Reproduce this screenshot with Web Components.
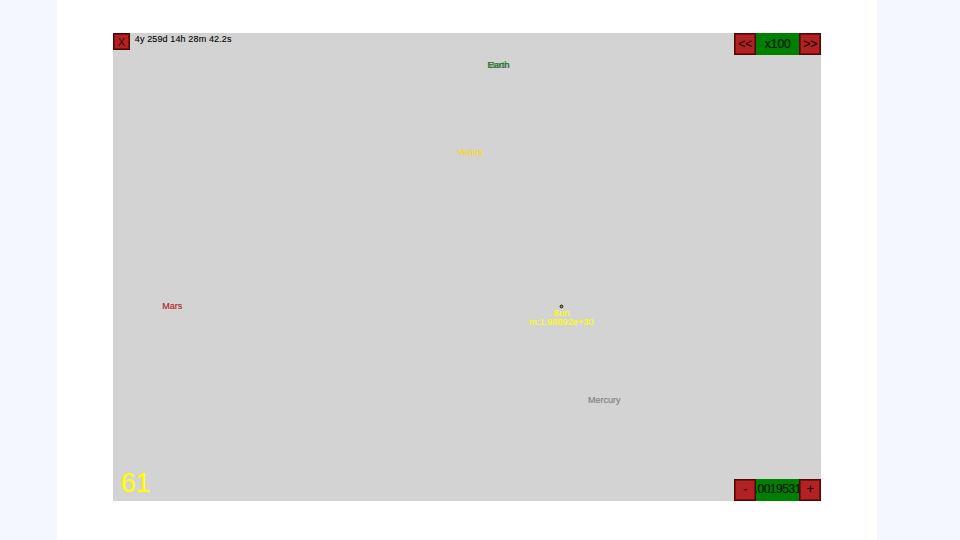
<!DOCTYPE html>
<html lang="en">
<head>
<meta charset="utf-8">
<title>Solar system</title>
<style>
body { margin: 0; background: #f4f7ff; font-family: "Liberation Sans", Arial, sans-serif; }
</style>
</head>
<body>
<orbit-app></orbit-app>
<script>
const attach = (el, html) => { el.attachShadow({ mode: "open" }).innerHTML = html; };

customElements.define("sim-button", class extends HTMLElement {
  constructor() {
    super();
    attach(this, `<style>
      :host { display: flex; flex: none; box-sizing: border-box; width: 22px; height: 22px; align-items: center; justify-content: center;
        background: #b22222; border: 1px solid #4a0808; box-shadow: inset 0 0 0 1px #7a1212; color: #1c0303;
        font-size: 12px; line-height: 14px; padding-bottom: var(--lift, 2px); -webkit-text-stroke: 0.2px; }
      :host([small]) { width: 17.5px; height: 17px; font-size: 10.5px; padding-bottom: 0; color: #3c0606; -webkit-text-stroke: 0; }
    </style><slot></slot>`);
  }
});

customElements.define("sim-stepper", class extends HTMLElement {
  constructor() {
    super();
    attach(this, `<style>
      :host { display: flex; width: 87px; height: 22px; font-size: 12px; }
      .value { flex: 1; min-width: 0; overflow: hidden; display: flex; align-items: center; justify-content: center;
        background: #008000; color: #041404; white-space: nowrap; line-height: 14px; padding-bottom: var(--lift, 2px); box-sizing: border-box;
        -webkit-text-stroke: 0.2px; }
      :host([dense]) .value { letter-spacing: -0.45px; }
      :host(:not([dense])) { --lift: 0px; }
    </style>
    <sim-button>${this.getAttribute("down").replace(/</g, "&lt;")}</sim-button>
    <div class="value"><slot></slot></div>
    <sim-button>${this.getAttribute("up").replace(/>/g, "&gt;")}</sim-button>`);
  }
});

customElements.define("body-label", class extends HTMLElement {
  constructor() {
    super();
    attach(this, `<style>
      :host { position: absolute; transform: translate(-50%, -50%); font-size: 9px; line-height: 9px;
        text-align: center; white-space: nowrap; -webkit-text-stroke: 0.15px; }
      :host([wide]) { letter-spacing: 0.12px; }
    </style><slot></slot>`);
  }
  connectedCallback() {
    this.style.left = this.getAttribute("x") + "px";
    this.style.top = this.getAttribute("y") + "px";
    this.style.color = this.getAttribute("color");
  }
});

customElements.define("sun-marker", class extends HTMLElement {
  constructor() {
    super();
    attach(this, `<style>
      :host { position: absolute; left: 446px; top: 271px; width: 5px; height: 5px; }
      svg { display: block; }
    </style><svg width="5" height="5" viewBox="0 0 5 5"><circle cx="2.5" cy="2.5" r="1.4" fill="#a8a830" stroke="#111" stroke-width="1"/></svg>`);
  }
});

customElements.define("orbit-app", class extends HTMLElement {
  constructor() {
    super();
    attach(this, `<style>
      :host { display: flex; justify-content: center; height: 540px; padding-right: 26px; box-sizing: border-box; overflow: hidden; }
      main { width: 820px; background: #fff; display: flex; justify-content: center; padding: 33px 0 0; box-sizing: border-box; }
      .stage { position: relative; width: 708.5px; height: 467.5px; background: #d3d3d3; display: flex; flex-direction: column;
        justify-content: space-between; }
      .row { display: flex; justify-content: space-between; align-items: flex-start; }
      .row.bottom { align-items: flex-end; }
      .left { display: flex; gap: 4.5px; }
      time { font-size: 9px; line-height: 12px; letter-spacing: 0.13px; color: #000; white-space: nowrap; -webkit-text-stroke: 0.1px; }
      .fps { font-size: 27px; line-height: 30px; color: #ff0; padding: 0 0 3px 8px; letter-spacing: -0.3px; -webkit-text-stroke: 0.2px; }
    </style>
    <main><section class="stage">
      <div class="row">
        <div class="left"><sim-button small>X</sim-button><time>4y 259d 14h 28m 42.2s</time></div>
        <sim-stepper down="<<" up=">>">x100</sim-stepper>
      </div>
      <body-label x="385.7" y="32" color="#808080">Moon</body-label>
      <body-label x="385.7" y="32" color="#187818">Earth</body-label>
      <body-label x="357.2" y="119" color="#ffd700" wide>Venus</body-label>
      <body-label x="59.5" y="272.5" color="#b22222">Mars</body-label>
      <body-label x="491.5" y="367" color="#808080">Mercury</body-label>
      <sun-marker></sun-marker>
      <body-label x="448.7" y="285" color="#ffff00" wide>Sun<br>m:1.98892e+30</body-label>
      <div class="row bottom">
        <div class="fps">61</div>
        <sim-stepper dense down="-" up="+">.0019531</sim-stepper>
      </div>
    </section></main>`);
  }
});
</script>
</body>
</html>
